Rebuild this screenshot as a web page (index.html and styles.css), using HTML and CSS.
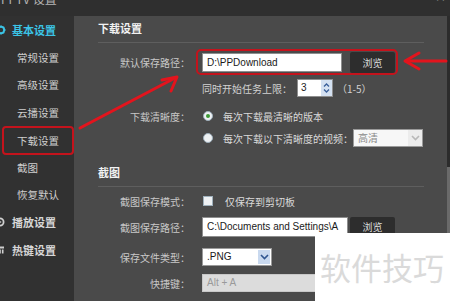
FILE: index.html
```html
<!DOCTYPE html>
<html lang="zh-CN">
<head>
<meta charset="utf-8">
<title>PPTV 设置</title>
<link rel="stylesheet" href="styles.css">
</head>
<body>
<div class="app">
  <header class="titlebar">
    <span class="title">PPTV 设置</span>
    <span class="winbtns">– ×</span>
  </header>
  <div class="main">
    <nav class="side">
      <div class="cat cat-active">
        <svg class="cat-icon" width="10" height="10" viewBox="0 0 10 10"><circle cx="5" cy="5" r="3.2" fill="none" stroke="#3bc4e6" stroke-width="2"/><path d="M5 0.5V2M5 8V9.5M0.5 5H2M8 5H9.5M1.8 1.8L2.9 2.9M7.1 7.1L8.2 8.2M8.2 1.8L7.1 2.9M2.9 7.1L1.8 8.2" stroke="#3bc4e6" stroke-width="1.4"/></svg>
        <span>基本设置</span>
      </div>
      <div class="sub">常规设置</div>
      <div class="sub">高级设置</div>
      <div class="sub">云播设置</div>
      <div class="sub sub-mark">下载设置</div>
      <div class="sub">截图</div>
      <div class="sub">恢复默认</div>
      <div class="cat">
        <svg class="cat-icon" width="10" height="10" viewBox="0 0 10 10"><circle cx="4" cy="5" r="3.6" fill="none" stroke="#d0d0d0" stroke-width="1.8"/><path d="M3 3.2L5.6 5L3 6.8Z" fill="#d0d0d0"/></svg>
        <span>播放设置</span>
      </div>
      <div class="cat">
        <svg class="cat-icon" width="10" height="10" viewBox="0 0 10 10"><rect x="0" y="1.5" width="8" height="2" fill="#d0d0d0"/><rect x="0.5" y="4.5" width="1.6" height="4" fill="#d0d0d0"/><rect x="3.2" y="4.5" width="1.6" height="4" fill="#d0d0d0"/><rect x="5.9" y="4.5" width="1.6" height="4" fill="#d0d0d0"/></svg>
        <span>热键设置</span>
      </div>
    </nav>

    <section class="panel">
      <h2 class="sect">下载设置</h2>

      <div class="row row-path">
        <div class="label">默认保存路径：</div>
        <div class="mark-box">
          <div class="input input-path">D:\PPDownload</div>
          <div class="btn">浏览</div>
        </div>
      </div>

      <div class="row row-limit">
        <div class="label"></div>
        <div class="text">同时开始任务上限：</div>
        <div class="spin">
          <span class="spin-val">3</span>
          <span class="spin-arrows">
            <svg width="7" height="12" viewBox="0 0 7 12"><path d="M1 4.5L3.5 2L6 4.5M1 7.5L3.5 10L6 7.5" fill="none" stroke="#3a5f9a" stroke-width="1.3"/></svg>
          </span>
        </div>
        <div class="text range">（1-5）</div>
      </div>

      <div class="row row-q1">
        <div class="label">下载清晰度：</div>
        <span class="radio radio-on"></span>
        <div class="text opt">每次下载最清晰的版本</div>
      </div>

      <div class="row row-q2">
        <div class="label"></div>
        <span class="radio"></span>
        <div class="text opt">每次下载以下清晰度的视频：</div>
        <div class="select select-hd">
          <span class="select-val">高清</span>
          <span class="select-arrow">
            <svg width="9" height="6" viewBox="0 0 9 6"><path d="M1 1L4.5 4.5L8 1" fill="none" stroke="#b8b8b8" stroke-width="1.6"/></svg>
          </span>
        </div>
      </div>

      <h2 class="sect sect-2">截图</h2>

      <div class="row row-mode">
        <div class="label">截图保存模式：</div>
        <span class="check"></span>
        <div class="text opt opt-check">仅保存到剪切板</div>
      </div>

      <div class="row row-spath">
        <div class="label">截图保存路径：</div>
        <div class="input input-spath">C:\Documents and Settings\A</div>
        <div class="btn btn-2">浏览</div>
      </div>

      <div class="row row-type">
        <div class="label">保存文件类型：</div>
        <div class="select select-png">
          <span class="select-val dark">.PNG</span>
          <span class="select-arrow blue">
            <svg width="9" height="6" viewBox="0 0 9 6"><path d="M1 1L4.5 4.5L8 1" fill="none" stroke="#2f5590" stroke-width="1.6"/></svg>
          </span>
        </div>
      </div>

      <div class="row row-key">
        <div class="label">快捷键：</div>
        <div class="input input-key">Alt + A</div>
      </div>
    </section>

    <div class="scroll"><div class="thumb"></div></div>
  </div>

  <svg class="annot" width="450" height="301" viewBox="0 0 450 301">
    <path d="M80 128L175 78" stroke="#e3141d" stroke-width="3" stroke-linecap="round" fill="none"/>
    <path d="M162 80L177 77L171 91" stroke="#e3141d" stroke-width="3" stroke-linecap="round" stroke-linejoin="round" fill="none"/>
    <path d="M446 61L406 61" stroke="#e3141d" stroke-width="3" stroke-linecap="round" fill="none"/>
    <path d="M419 53L405 61L419 69" stroke="#e3141d" stroke-width="3" stroke-linecap="round" stroke-linejoin="round" fill="none"/>
  </svg>

  <div class="watermark">软件技巧</div>
</div>
</body>
</html>
```

FILE: styles.css
```css
* { box-sizing: border-box; margin: 0; padding: 0; }

html, body {
  width: 450px;
  height: 301px;
  overflow: hidden;
  background: #313131;
}

body {
  font-family: "Noto Sans CJK SC", "Noto Sans", sans-serif;
  font-size: 10px;
  color: #cfcfcf;
}

.app {
  position: relative;
  width: 450px;
  height: 301px;
  display: flex;
  flex-direction: column;
}

/* title bar */
.titlebar {
  height: 16px;
  flex: none;
  background: #2f2f2f;
  overflow: hidden;
  display: flex;
  justify-content: space-between;
  color: #b5b5b5;
}
.title {
  font-size: 12px;
  line-height: 12px;
  margin-top: -7px;
  padding-left: 1px;
}
.winbtns {
  font-size: 11px;
  line-height: 11px;
  margin-top: -8px;
  padding-right: 4px;
  color: #888;
}

.main {
  flex: 1;
  display: flex;
  min-height: 0;
}

/* sidebar */
.side {
  width: 74px;
  flex: none;
  background: #313131;
  display: flex;
  flex-direction: column;
}
.cat, .sub {
  height: 27.5px;
  flex: none;
  display: flex;
  align-items: center;
  white-space: nowrap;
}
.cat {
  font-size: 11px;
  font-weight: bold;
  color: #d6d6d6;
}
.cat-active { color: #3bc4e6; }
.cat-icon {
  margin-left: -4px;
  margin-right: 6px;
  flex: none;
}
.sub {
  padding-left: 17px;
  font-size: 10.5px;
  color: #cfcfcf;
}
.sub-mark {
  margin-left: 2px;
  padding-left: 13px;
  border: 2px solid #c4131c;
  border-radius: 4px;
  height: 29px;
  margin-bottom: -1.5px;
}

/* panel */
.panel {
  flex: 1;
  background: #4a4a4a;
  padding: 0 23px 0 24px;
  display: flex;
  flex-direction: column;
}
.sect {
  height: 27px;
  line-height: 25px;
  font-size: 11px;
  font-weight: bold;
  color: #f2f2f2;
  border-bottom: 1px solid #5e5e5e;
  flex: none;
}
.sect-2 {
  margin-top: 13px;
}

.row {
  display: flex;
  align-items: center;
  flex: none;
  white-space: nowrap;
}
.label {
  width: 92px;
  flex: none;
  text-align: right;
  color: #c8c8c8;
  margin-right: 12px;
}
.text { color: #d2d2d2; }

.row-path { height: 26px; margin-top: 6px; }
.mark-box {
  display: flex;
  align-items: center;
  margin-left: -6px;
  height: 26px;
  padding: 0 1px 0 4px;
  border: 2px solid #c4131c;
  border-radius: 5px;
}
.input {
  height: 19px;
  background: #ffffff;
  border: 1px solid #8e8e8e;
  font-family: "Liberation Sans", Arial, sans-serif;
  font-size: 10px;
  line-height: 17px;
  color: #1a1a1a;
  padding-left: 4px;
  overflow: hidden;
  white-space: nowrap;
}
.input-path { width: 140px; }
.btn {
  height: 21px;
  width: 45px;
  margin-left: 8px;
  background: #2d2d2d;
  border-radius: 2px;
  color: #dedede;
  text-align: center;
  line-height: 21px;
  font-size: 10px;
}

.row-limit { height: 18px; margin-top: 4px; }
.row-limit .text:first-of-type { margin-left: 1px; }
.spin {
  margin-left: 5px;
  width: 36px;
  height: 18px;
  background: #fff;
  border: 1px solid #8e8e8e;
  display: flex;
  justify-content: space-between;
  font-family: "Liberation Sans", Arial, sans-serif;
  color: #1a1a1a;
}
.spin-val { padding-left: 3px; line-height: 16px; font-size: 10px; }
.spin-arrows {
  width: 11px;
  background: #d4e1f2;
  display: flex;
  align-items: center;
  justify-content: center;
}
.range { margin-left: 4px; }

.row-q1 { height: 18px; margin-top: 10px; }
.row-q2 { height: 18px; margin-top: 4px; }
.radio {
  width: 10px;
  height: 10px;
  border-radius: 50%;
  background: #eef1f3;
  border: 1px solid #9fb0bc;
  flex: none;
  margin-left: 1px;
  display: flex;
  align-items: center;
  justify-content: center;
}
.radio-on::after {
  content: "";
  width: 4px;
  height: 4px;
  border-radius: 50%;
  background: #3c9a36;
}
.opt { margin-left: 10px; color: #dadada; }

.select {
  height: 18px;
  background: #f7f7f7;
  border: 1px solid #9a9a9a;
  display: flex;
  justify-content: space-between;
  align-items: stretch;
}
.select-hd { width: 70px; }
.select-png { width: 70px; background: #fff; }
.select-val {
  padding-left: 4px;
  line-height: 16px;
  color: #8a8a8a;
}
.select-val.dark {
  color: #1a1a1a;
  font-family: "Liberation Sans", Arial, sans-serif;
  font-size: 10px;
}
.select-arrow {
  width: 14px;
  background: #ececec;
  display: flex;
  align-items: center;
  justify-content: center;
}
.select-arrow.blue {
  width: 12px;
  background: #c9d9ef;
  margin: 1px 1px 1px 0;
}

.row-mode { height: 18px; margin-top: 5px; }
.check {
  width: 10px;
  height: 10px;
  background: #eef1f4;
  border: 1px solid #9fb0bc;
  flex: none;
  margin-left: 1px;
}
.opt-check { margin-left: 12px; }

.row-spath { height: 20px; margin-top: 7px; }
.input-spath { width: 146px; height: 20px; line-height: 18px; }
.btn-2 { margin-left: 2px; height: 20px; line-height: 20px; }

.row-type { height: 18px; margin-top: 11px; }
.row-key { height: 18px; margin-top: 8px; }
.input-key {
  width: 146px;
  height: 18px;
  line-height: 16px;
  background: #dcdcdc;
  border-color: #c8c8c8;
  color: #9a9a9a;
}

/* scrollbar */
.scroll {
  width: 3px;
  flex: none;
  background: #2c2c2c;
}
.thumb {
  margin-top: 151px;
  height: 80px;
  background: #6a6a6a;
}

/* annotation overlay */
.annot {
  position: absolute;
  left: 0;
  top: 0;
  pointer-events: none;
}

.watermark {
  position: absolute;
  left: 315px;
  top: 233px;
  width: 135px;
  height: 68px;
  background: #ffffff;
  color: #dadada;
  font-size: 31px;
  line-height: 68px;
  padding-left: 5px;
  letter-spacing: 0px;
  white-space: nowrap;
}
```
